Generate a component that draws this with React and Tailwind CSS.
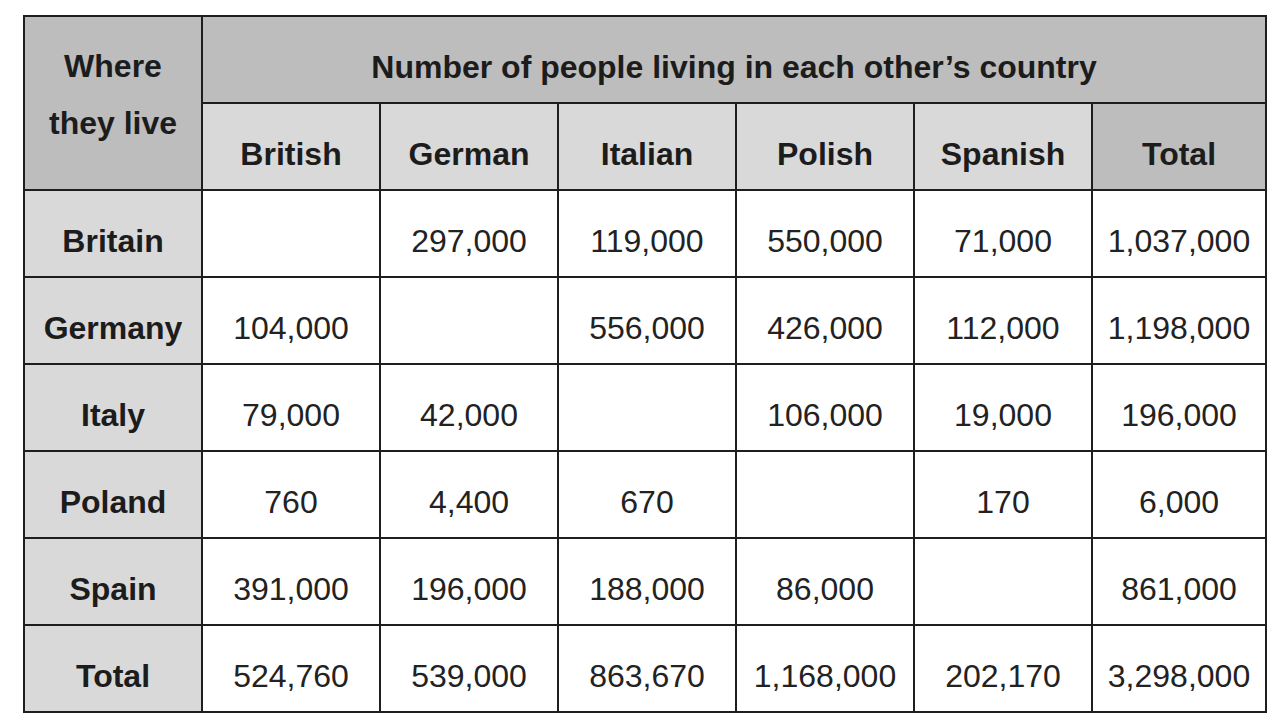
import React from 'react';

const columns = ['British', 'German', 'Italian', 'Polish', 'Spanish'];

const rows = [
  { place: 'Britain', values: ['', '297,000', '119,000', '550,000', '71,000', '1,037,000'] },
  { place: 'Germany', values: ['104,000', '', '556,000', '426,000', '112,000', '1,198,000'] },
  { place: 'Italy', values: ['79,000', '42,000', '', '106,000', '19,000', '196,000'] },
  { place: 'Poland', values: ['760', '4,400', '670', '', '170', '6,000'] },
  { place: 'Spain', values: ['391,000', '196,000', '188,000', '86,000', '', '861,000'] },
  { place: 'Total', values: ['524,760', '539,000', '863,670', '1,168,000', '202,170', '3,298,000'] },
];

function Cell({ children, className = '' }) {
  return (
    <div className={`flex items-center justify-center pt-[14px] whitespace-nowrap ${className}`}>
      {children}
    </div>
  );
}

export default function App() {
  return (
    <div className="w-[1280px] h-[725px] bg-white overflow-hidden pt-[15px] pl-[23px] font-['Liberation_Sans',Arial,sans-serif] text-[32px] text-[#1c1c1c]">
      <div className="grid grid-cols-[176px_176px_176px_176px_176px_176px_172px] grid-rows-[repeat(8,85px)] gap-[2px] p-[2px] bg-[#1e1e1e] w-[1244px]">
        <div className="row-span-2 bg-[#bdbdbd] font-bold text-center leading-[57px] pt-[21px]">
          Where
          <br />
          they live
        </div>
        <Cell className="col-span-6 bg-[#bdbdbd] font-bold">Number of people living in each other’s country</Cell>

        {columns.map((c) => (
          <Cell key={c} className="bg-[#d9d9d9] font-bold">{c}</Cell>
        ))}
        <Cell className="bg-[#bdbdbd] font-bold">Total</Cell>

        {rows.map((r) => (
          <React.Fragment key={r.place}>
            <Cell className="bg-[#d9d9d9] font-bold">{r.place}</Cell>
            {r.values.map((v, i) => (
              <Cell key={i} className="bg-white text-[#222]">{v}</Cell>
            ))}
          </React.Fragment>
        ))}
      </div>
    </div>
  );
}
